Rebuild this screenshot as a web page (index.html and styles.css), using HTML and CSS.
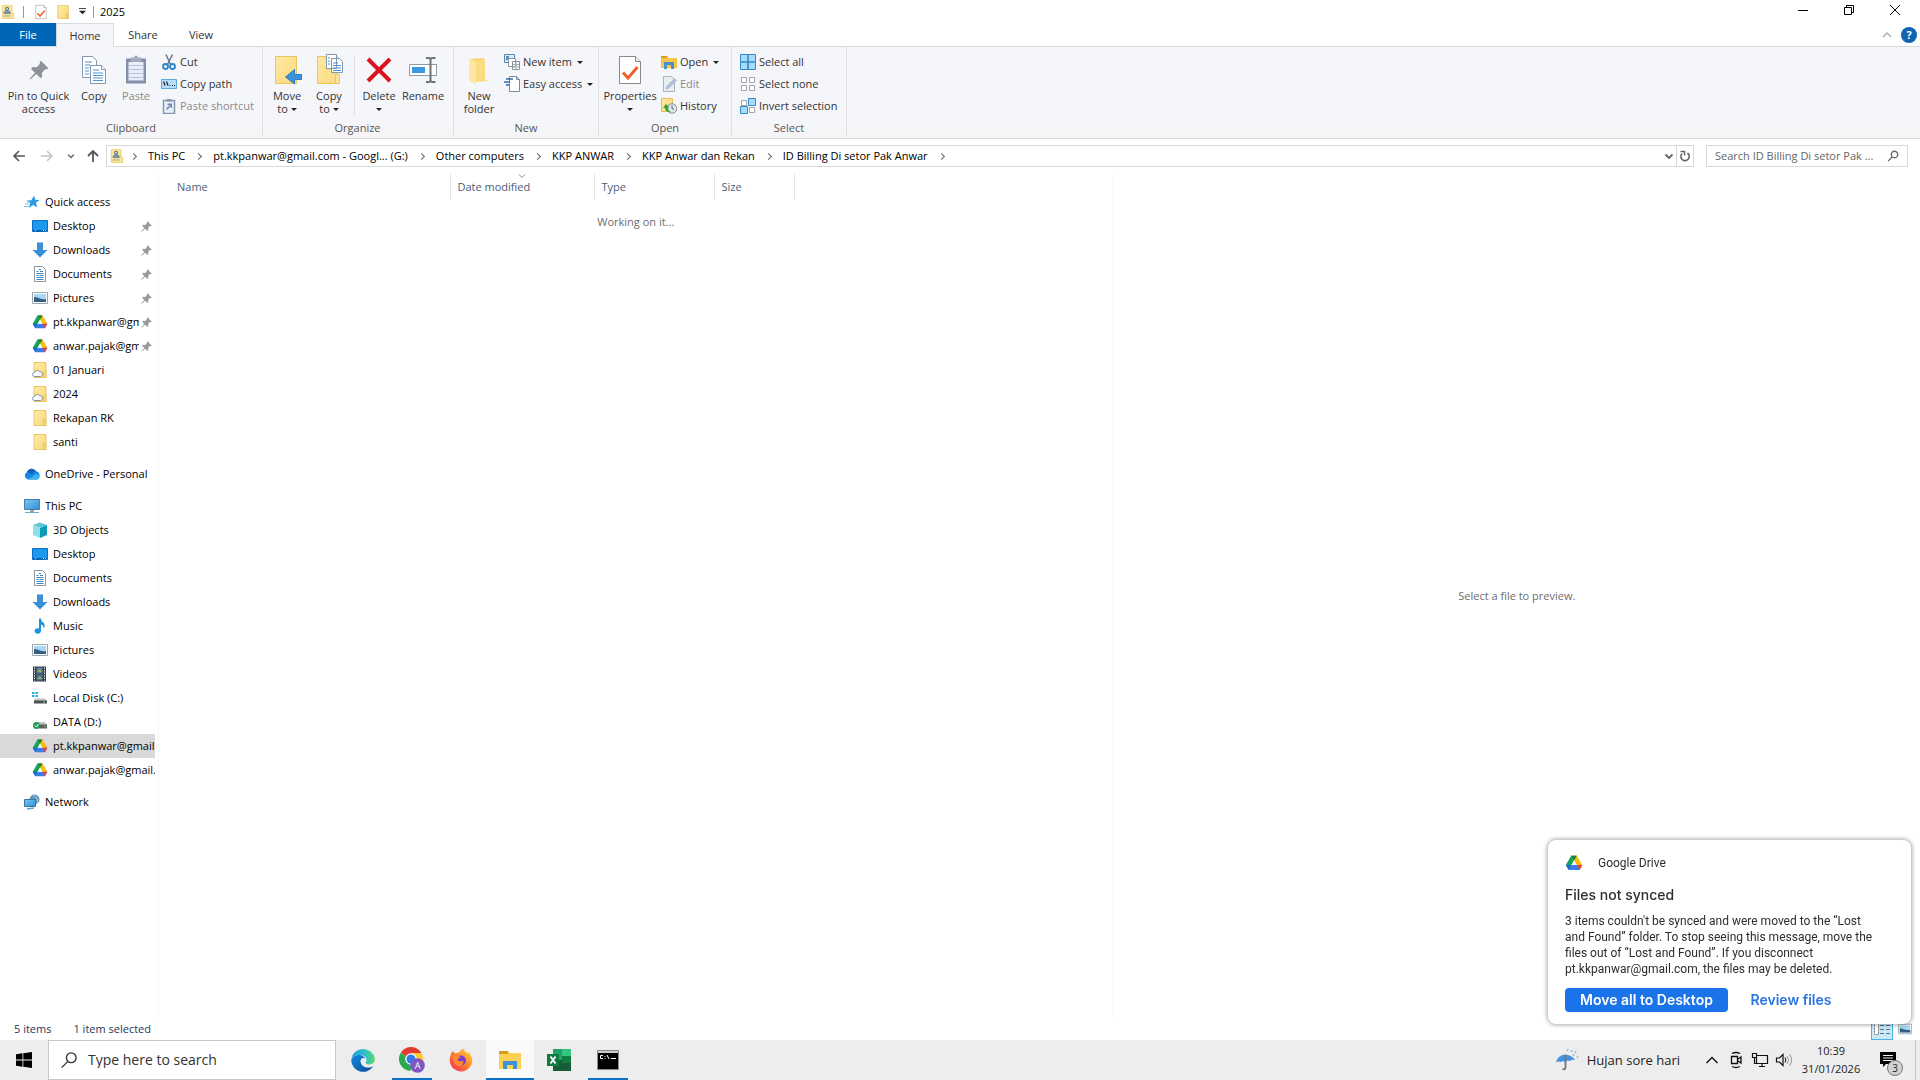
FILE: index.html
```html
<!DOCTYPE html>
<html lang="en">
<head>
<meta charset="utf-8">
<meta name="viewport" content="width=device-width, initial-scale=1">
<title>2025</title>
<link rel="stylesheet" href="styles.css">
</head>
<body>
<svg class="sprite" aria-hidden="true">
  <defs>
    <linearGradient id="g-folder" x1="0" y1="0" x2="1" y2="1"><stop offset="0" stop-color="#ffe9a2"/><stop offset="1" stop-color="#f9d97f"/></linearGradient>
    <linearGradient id="g-sky" x1="0" y1="0" x2="1" y2="1"><stop offset="0" stop-color="#7cc7f2"/><stop offset="1" stop-color="#2f8fd6"/></linearGradient>
    <linearGradient id="g-edge" x1="0" y1="0" x2="1" y2="0"><stop offset="0" stop-color="#1c9de0"/><stop offset="0.6" stop-color="#2fc1c9"/><stop offset="1" stop-color="#5fdc6b"/></linearGradient>
    <linearGradient id="g-edge2" x1="0" y1="0" x2="1" y2="1"><stop offset="0" stop-color="#1489dc"/><stop offset="1" stop-color="#0b4c9c"/></linearGradient>
    <linearGradient id="g-fox" x1="1" y1="0" x2="0" y2="1"><stop offset="0" stop-color="#ffe14a"/><stop offset="0.45" stop-color="#ff8a2a"/><stop offset="1" stop-color="#f0245c"/></linearGradient>
    <symbol id="i-folder" viewBox="0 0 16 16"><path d="M2 .5h12v15H2z" fill="url(#g-folder)" stroke="#e9c766"/><path d="M11.500 10h2.500v5.500h-2.500z" fill="#fbe08b" stroke="#e3bd57"/></symbol>
    <symbol id="i-cloudfolder" viewBox="0 0 16 16"><use href="#i-folder"/><path d="M2.500 14.500a2 2 0 0 1 .2-4 2.600 2.600 0 0 1 4.900-.6 2.300 2.300 0 0 1 .9 4.600z" fill="#fff" stroke="#8095b5"/></symbol>
    <symbol id="i-userfolder" viewBox="0 0 16 16"><path d="M1.500.5h11v9h2v6h-13z" fill="#fbe58f" stroke="#e8cf72"/><circle cx="7" cy="4.200" r="1.600" fill="#dfeaf2" stroke="#47709d" stroke-width="1.200"/><path d="M3.500 9.500c0-4 7-4 7 0z" fill="#7ba0bf" stroke="#47709d"/><path d="M3 12.500h8" stroke="#89a5bd"/></symbol>
    <symbol id="i-check" viewBox="0 0 24 32"><path d="M1.500 2.500h16l5 5v22h-21z" fill="#fff" stroke="#8a8a8a"/><path d="M17.500 2.500v5h5" fill="#eee" stroke="#8a8a8a"/><path d="M5 18.500l5 5.500L19.500 13" fill="none" stroke="#ee6127" stroke-width="3"/></symbol>
    <symbol id="i-pin" viewBox="0 0 16 16"><path d="M9.500.5l6 6-1.300 1-1.200-.2-2.600 2.700.2 3.200-1.400 1.300-3.300-3.400L1 15.500l-.5-.5 4.300-4.900L1.600 6.900 3 5.500l3.200.2L8.800 3l-.3-1.300z" fill="#8d9399"/></symbol>
    <symbol id="i-docs" viewBox="0 0 32 32"><g fill="#fff" stroke="#8498ad"><path d="M4.500 2.500h10l4 4v17h-14z"/><path d="M12.500 11.500h11l4 4v14h-15z"/><path d="M23.500 11.500v4h4"/></g><path d="M7 8h7M7 11h5M7 14h4M7 17h4M7 20h4M15 16h6M15 19h10M15 21.500h10M15 24h10M15 26.500h10" stroke="#4d93d6"/></symbol>
    <symbol id="i-paste" viewBox="0 0 32 32"><path d="M6 4.500h20v25H6z" fill="#8590ad"/><path d="M8.500 8h15v18.500h-15z" fill="#e9eef8"/><path d="M11 3.500h3a2 2 0 0 1 4 0h3V8H11z" fill="#a5acbd"/><path d="M8.500 11.500h15M8.500 15.500h15M8.500 19.500h15M8.500 23.500h15" stroke="#b4c2da"/></symbol>
    <symbol id="i-cut" viewBox="0 0 16 16"><path d="M5 .5l4.500 10M11.500.5L6.500 10.500" stroke="#68798b" stroke-width="1.500"/><circle cx="4.500" cy="12.500" r="2.500" fill="none" stroke="#2c83c5" stroke-width="1.800"/><circle cx="11.500" cy="12.500" r="2.500" fill="none" stroke="#2c83c5" stroke-width="1.800"/></symbol>
    <symbol id="i-path" viewBox="0 0 16 16"><path d="M.5 3.500h15v9H.5z" fill="#b4defa" stroke="#5fa9dd"/><path d="M2.500 5.500l1.500 4M5.500 5.500l1.500 4M8.500 9.500h1M11 9.500h1M13 9.500h1" stroke="#222" stroke-width="1.200"/></symbol>
    <symbol id="i-shortcut" viewBox="0 0 16 16"><path d="M2.500 2.500h11v13h-11z" fill="#eaf0fa" stroke="#8893ad" stroke-width="1.500"/><path d="M5.500 1h5v2.500h-5z" fill="#8893ad"/><path d="M5.500 12.500V10L9 7H6.500V5.500H11V10H9.700V8.300L7 11z" fill="#6c86b8"/></symbol>
    <symbol id="i-move" viewBox="0 0 32 32"><path d="M4.500 2.500h21v27h-21z" fill="url(#g-folder)" stroke="#eac45c"/><path d="M30.500 20.500v5h-7v4.500L14.500 23l9-7.500v5z" fill="#3e92dc" stroke="#2c7fc9"/></symbol>
    <symbol id="i-copyto" viewBox="0 0 32 32"><path d="M4.500 2.500h20v27h-20z" fill="url(#g-folder)" stroke="#eac45c"/><path d="M22.500 20.500h4v9h-4z" fill="#ffe59a" stroke="#eac45c"/><path d="M13.500.5h10v14h-10zM18.500 4.500h8l3 3v11h-11z" fill="#fff" stroke="#8498ad"/><path d="M20 9h5M20 11.500h8M20 14h8M20 16.500h8M15 4h2M15 7h2M15 10h2" stroke="#4d93d6"/></symbol>
    <symbol id="i-delete" viewBox="0 0 32 32"><path d="M5 5l22 22M27 5L5 27" stroke="#d9141e" stroke-width="4"/></symbol>
    <symbol id="i-rename" viewBox="0 0 32 32"><path d="M2.500 10.500h27v11h-27z" fill="#fff" stroke="#8e9aa5"/><path d="M5 13h13v6H5z" fill="#3b97e0"/><path d="M19 4h3q1.500 0 1.500 2v20q0 2-1.500 2h-3M28.500 4h-3q-2 0-2 2v20q0 2 2 2h3" fill="none" stroke="#6d7379" stroke-width="2"/></symbol>
    <symbol id="i-newfolder" viewBox="0 0 32 32"><path d="M6 5l15-1v22H6z" fill="#f7d372"/><path d="M6 4l7 4v23l-7-5z" fill="#fde7a3"/><path d="M13 8l9-3v20l3 2-12 1z" fill="#fbdc85"/></symbol>
    <symbol id="i-newitem" viewBox="0 0 16 16"><path d="M.5.5h10v8H.5z" fill="#d8ecfb" stroke="#5b88b3"/><path d="M2 3h3M2 5h2" stroke="#2e6da4" stroke-width="1.300"/><path d="M4.500 4.500h7v8h-7zM8.500 7.500h7v8h-7z" fill="#fff" stroke="#8b949c"/><path d="M9 10.500h6M9 13h6M12 8v7" stroke="#a6aeb5"/></symbol>
    <symbol id="i-easy" viewBox="0 0 16 16"><path d="M5.500.5h7l3 3v12h-10z" fill="#fff" stroke="#7f8a94"/><path d="M12.500.5v3h3" fill="none" stroke="#7f8a94"/><path d="M2 3h7M0 6h6M2 9h3" stroke="#2b6ca8" stroke-width="1.500"/></symbol>
    <symbol id="i-open" viewBox="0 0 16 16"><path d="M0 2h6l1 2h9v10H0z" fill="#f4c649"/><path d="M0 2h6l1 2H0z" fill="#d79d20"/><path d="M3 15V8h10v7h-3v-4H6v4z" fill="#4a8fce"/></symbol>
    <symbol id="i-edit" viewBox="0 0 16 16"><path d="M2.500.5h8l3 3v12h-11z" fill="#e9eef5" stroke="#a7b4c5"/><path d="M5 13l1-3 7.500-7.500 2 2L8 12z" fill="#b3c4dc" stroke="#92a6c4" stroke-width=".6"/></symbol>
    <symbol id="i-history" viewBox="0 0 16 16"><path d="M.5.5h11v13H.5z" fill="url(#g-folder)" stroke="#e3bd57"/><circle cx="11" cy="10.500" r="4.800" fill="#dfe6ec" stroke="#82909c"/><path d="M11 7.500v3l2 1" stroke="#566" fill="none"/><path d="M2 10l3-4 3.500 3.500H7q0 3 3 4.500-5.500.5-6-4z" fill="#2fa43a"/></symbol>
    <symbol id="i-selall" viewBox="0 0 16 16"><path d="M.5.5h15v15H.5z" fill="#a5dcfb" stroke="#3788c8"/><path d="M8 0v16M0 8h16" stroke="#3788c8" stroke-width="1.600"/></symbol>
    <symbol id="i-selnone" viewBox="0 0 16 16"><path d="M1.500 1.500h5v5h-5zM9.500 1.500h5v5h-5zM1.500 9.500h5v5h-5zM9.500 9.500h5v5h-5z" fill="#fff" stroke="#a4a4a4"/></symbol>
    <symbol id="i-selinv" viewBox="0 0 16 16"><path d="M1.500 2.500h5v5h-5zM9.500 9.500h5v5h-5z" fill="#fff" stroke="#a4a4a4"/><path d="M8.500.5h7v7h-7zM.5 8.500h7v7h-7z" fill="#a5dcfb" stroke="#3788c8"/></symbol>
    <symbol id="i-star" viewBox="0 0 16 16"><path d="M10 1.500l1.300 4.200 4.200.3-3.500 2.800 1.200 4.700-3.900-2.600L4.500 14l1.800-4.700L2.500 6.500l4.800-.3z" fill="#2e9be3"/><path d="M1 10h4M0 12.500h4.500M3 8l3-.5" stroke="#7cc1ee"/></symbol>
    <symbol id="i-desktop" viewBox="0 0 16 16"><path d="M.5 2.500h15v11H.5z" fill="#1c9af0" stroke="#0c6fc0"/><path d="M1 12.500h14" stroke="#0a5ba3"/><path d="M3 12.500h1M11 12.500h1M13 12.500h1" stroke="#9fd5ff"/></symbol>
    <symbol id="i-down" viewBox="0 0 16 16"><path d="M5 .5h6V8h4.500L8 15.500.5 8H5z" fill="#3b8fd8"/></symbol>
    <symbol id="i-document" viewBox="0 0 16 16"><path d="M2.500.5h8l3 3v12h-11z" fill="#fff" stroke="#8a959f"/><path d="M7 3.500h2M4.500 5.500h2M8 5.500h3M4.500 7.500h7M4.500 9.500h2M7.500 9.500h4M4.500 11.500h7M4.500 13.500h7" stroke="#3b83bb"/></symbol>
    <symbol id="i-picture" viewBox="0 0 16 16"><path d="M.5 2.500h15v11H.5z" fill="#fff" stroke="#9aa5af"/><path d="M2 4h12v8H2z" fill="#a9d8f4"/><path d="M2 7c4 0 6 3 12 2v3H2z" fill="#33607f"/></symbol>
    <symbol id="i-drive" viewBox="0 0 16 16"><path d="M5.500 1.500h5L8 5.800 3.400 14 .7 9.700z" fill="#13a45b"/><path d="M5.500 1.500h5l4.900 8.300h-5z" fill="#fbbc05"/><path d="M3.200 14.200l2.500-4.400h9.700l-2.500 4.400z" fill="#3b7ded"/><path d="M.7 9.800h5l-2.500 4.400z" fill="#1a67d6"/><path d="M10.400 9.800h5l-2.500 4.400z" fill="#ea4335"/><path d="M5.500 1.500h5L8 5.800z" fill="#0c8443"/><path d="M8 5.800l2.400 4H5.700z" fill="#fff"/></symbol>
    <symbol id="i-onedrive" viewBox="0 0 16 16"><path d="M4 13.500A4 4 0 0 1 3 6a5 5 0 0 1 9-.7 4.200 4.200 0 0 1 .5 8.200z" fill="#1686e0"/><path d="M3 6a5 5 0 0 1 9-.7Q9 5.500 8 8z" fill="#1560b8"/><path d="M4 13.500L12 8q4 1 3.500 3.500t-3 2z" fill="#3bb4f2"/></symbol>
    <symbol id="i-pc" viewBox="0 0 16 16"><path d="M.5 1.500h15v10H.5z" fill="url(#g-sky)" stroke="#4c7ea8"/><path d="M6 12h4v2H6z" fill="#8fa9bb"/><path d="M1 14.500h14" stroke="#7faac6"/></symbol>
    <symbol id="i-3d" viewBox="0 0 16 16"><path d="M1 3l7-2.500L15 3 8 6z" fill="#5ec4d8"/><path d="M1 3l7 3v10l-7-3z" fill="#8ee0e8"/><path d="M15 3L8 6v10l7-3z" fill="#0c9bb4"/></symbol>
    <symbol id="i-music" viewBox="0 0 16 16"><path d="M7 .5h2q0 3 3 4.500 1.500 3-.5 5.500Q11.500 7 9 6.500V13a3.200 2.700 0 1 1-2-2.500z" fill="#1795e0"/></symbol>
    <symbol id="i-video" viewBox="0 0 16 16"><path d="M1 .5h13v15H1z" fill="#39414a"/><path d="M4.500 1.500h6v6h-6z" fill="#57829b"/><path d="M4.500 8.500h6v6h-6z" fill="#4c6f9e"/><path d="M5 6l3-3 2 3zM5 13l3-3 2 3z" fill="#9eb04d"/><path d="M2.500 1.500v13M12.500 1.500v13" stroke="#dfe4e8" stroke-width="1" stroke-dasharray="1.500 1"/></symbol>
    <symbol id="i-disk" viewBox="0 0 16 16"><path d="M0 2h2.500v2H0zM3.500 2H6v2H3.500zM0 5h2.500v2H0zM3.500 5H6v2H3.500z" fill="#29b3dd"/><path d="M3 8.500h10l2 2.500H2z" fill="#c1c4c6"/><path d="M2 10.500h13v3H2z" fill="#4c5053"/><path d="M11 12h2" stroke="#6be05c"/></symbol>
    <symbol id="i-data" viewBox="0 0 16 16"><path d="M6 8h7l2 3H6z" fill="#c1c4c6"/><path d="M7 10.500h8v4H7z" fill="#5b5f62"/><circle cx="4.500" cy="11.500" r="3.500" fill="#249b57"/><path d="M3 11.500l1.500 1.500 2-3" stroke="#fff" fill="none"/><path d="M12 12.500h1.500" stroke="#6be05c"/></symbol>
    <symbol id="i-network" viewBox="0 0 16 16"><circle cx="10.500" cy="5.500" r="5" fill="#6296bd"/><path d="M9 1q6 3 4 9" stroke="#a9cde6" fill="none"/><path d="M.5 5.500h11v7H.5z" fill="url(#g-sky)" stroke="#39759e"/><path d="M3 15l7-1" stroke="#59a2cc" stroke-width="1.500"/></symbol>
    <symbol id="i-chev-d" viewBox="0 0 10 10"><path d="M1.500 3.500L5 7l3.500-3.500" fill="none" stroke="#666" stroke-width="1.800"/></symbol>
    <symbol id="i-glass" viewBox="0 0 16 16"><circle cx="10" cy="6" r="4.300" fill="none" stroke="currentColor" stroke-width="var(--sw,1.8)"/><path d="M7 9.200L1.500 14.800" stroke="currentColor" stroke-width="var(--sw,1.8)"/></symbol>
  </defs>
</svg>

<header class="titlebar">
  <svg class="ic16"><use href="#i-userfolder"/></svg>
  <span class="vbar"></span>
  <button class="quick" aria-label="Properties"><svg class="ic-check"><use href="#i-check"/></svg></button>
  <button class="quick" aria-label="New folder"><svg class="ic16"><use href="#i-folder"/></svg></button>
  <button class="quick-more" aria-label="Customize toolbar"><svg width="7" height="7" viewBox="0 0 8 8"><path d="M0 .5h8" stroke="#222"/><path d="M0 3h8L4 7z" fill="#222"/></svg></button>
  <span class="vbar"></span>
  <h1 class="window-title">2025</h1>
  <div class="window-controls">
    <button aria-label="Minimize"><svg width="12" height="12"><path d="M1 6.500h10" stroke="#000"/></svg></button>
    <button aria-label="Restore"><svg width="12" height="12"><path d="M1.500 3.500h7v7h-7zM3.500 3.500v-2h7v7h-2" fill="none" stroke="#000"/></svg></button>
    <button aria-label="Close"><svg width="12" height="12"><path d="M1 1l10 10M11 1L1 11" stroke="#000"/></svg></button>
  </div>
</header>

<nav class="tabs" aria-label="Ribbon tabs">
  <button class="tab tab-file">File</button>
  <button class="tab tab-active">Home</button>
  <button class="tab">Share</button>
  <button class="tab">View</button>
  <div class="tabs-end">
    <button aria-label="Collapse ribbon"><svg width="10" height="10"><path d="M1 7l4-4 4 4" fill="none" stroke="#a9a9a9" stroke-width="1.300"/></svg></button>
    <button class="help" aria-label="Help">?</button>
  </div>
</nav>

<section class="ribbon" aria-label="Ribbon">
  <div class="group group-clipboard">
    <div class="group-body">
      <button class="big big-wide"><svg class="ic-pin-big"><use href="#i-pin"/></svg><span>Pin to Quick<br>access</span></button>
      <button class="big"><svg><use href="#i-docs"/></svg><span>Copy</span></button>
      <button class="big" disabled><svg><use href="#i-paste"/></svg><span>Paste</span></button>
      <div class="small-col">
        <button class="small"><svg><use href="#i-cut"/></svg>Cut</button>
        <button class="small"><svg><use href="#i-path"/></svg>Copy path</button>
        <button class="small" disabled><svg><use href="#i-shortcut"/></svg>Paste shortcut</button>
      </div>
    </div>
    <div class="group-label">Clipboard</div>
  </div>
  <div class="group group-organize">
    <div class="group-body">
      <button class="big"><svg><use href="#i-move"/></svg><span>Move<br>to <i class="caret"></i></span></button>
      <button class="big"><svg><use href="#i-copyto"/></svg><span>Copy<br>to <i class="caret"></i></span></button>
      <span class="group-split"></span>
      <button class="big"><svg><use href="#i-delete"/></svg><span>Delete<br><i class="caret"></i></span></button>
      <button class="big big-rename"><svg><use href="#i-rename"/></svg><span>Rename</span></button>
    </div>
    <div class="group-label">Organize</div>
  </div>
  <div class="group group-new">
    <div class="group-body">
      <button class="big"><svg><use href="#i-newfolder"/></svg><span>New<br>folder</span></button>
      <div class="small-col">
        <button class="small"><svg><use href="#i-newitem"/></svg>New item<i class="caret"></i></button>
        <button class="small"><svg><use href="#i-easy"/></svg>Easy access<i class="caret"></i></button>
      </div>
    </div>
    <div class="group-label">New</div>
  </div>
  <div class="group group-open">
    <div class="group-body">
      <button class="big big-mid"><svg><use href="#i-check"/></svg><span>Properties<br><i class="caret"></i></span></button>
      <div class="small-col">
        <button class="small"><svg><use href="#i-open"/></svg>Open<i class="caret"></i></button>
        <button class="small" disabled><svg><use href="#i-edit"/></svg>Edit</button>
        <button class="small"><svg><use href="#i-history"/></svg>History</button>
      </div>
    </div>
    <div class="group-label">Open</div>
  </div>
  <div class="group group-select">
    <div class="group-body">
      <div class="small-col">
        <button class="small"><svg><use href="#i-selall"/></svg>Select all</button>
        <button class="small"><svg><use href="#i-selnone"/></svg>Select none</button>
        <button class="small"><svg><use href="#i-selinv"/></svg>Invert selection</button>
      </div>
    </div>
    <div class="group-label">Select</div>
  </div>
</section>

<div class="navbar">
  <div class="nav-buttons">
    <button aria-label="Back"><svg width="14" height="12"><path d="M7 1L2 6l5 5M2 6h11" fill="none" stroke="#555" stroke-width="1.600"/></svg></button>
    <button aria-label="Forward" disabled><svg width="14" height="12"><path d="M7 1l5 5-5 5M12 6H1" fill="none" stroke="#c4c4c4" stroke-width="1.600"/></svg></button>
    <button class="nav-recent" aria-label="Recent locations"><svg width="8" height="8"><use href="#i-chev-d"/></svg></button>
    <button class="nav-up" aria-label="Up"><svg width="12" height="14"><path d="M1 7l5-5 5 5M6 2v11" fill="none" stroke="#555" stroke-width="1.800"/></svg></button>
  </div>
  <div class="address">
    <svg class="ic16"><use href="#i-userfolder"/></svg>
    <ol class="crumbs">
      <li><a href="#">This PC</a></li>
      <li><a href="#">pt.kkpanwar@gmail.com - Googl... (G:)</a></li>
      <li><a href="#">Other computers</a></li>
      <li><a href="#">KKP ANWAR</a></li>
      <li><a href="#">KKP Anwar dan Rekan</a></li>
      <li><a href="#">ID Billing Di setor Pak Anwar</a></li>
      <li></li>
    </ol>
    <button class="address-more" aria-label="Previous locations"><svg width="10" height="10"><use href="#i-chev-d"/></svg></button>
    <button class="refresh" aria-label="Refresh"><svg width="12" height="12"><path d="M8.500 3a4.200 4.200 0 1 1-5.500.5" fill="none" stroke="#666" stroke-width="1.600"/><path d="M1.500 1.500h4v4" fill="none" stroke="#666" stroke-width="1.500"/></svg></button>
  </div>
  <div class="search">
    <input type="text" aria-label="Search folder" placeholder="Search ID Billing Di setor Pak ...">
    <svg width="12" height="12"><use href="#i-glass"/></svg>
  </div>
</div>

<main class="panes">
  <nav class="sidebar" aria-label="Navigation pane">
    <ul>
      <li class="root"><svg><use href="#i-star"/></svg><a href="#">Quick access</a></li>
      <li><svg><use href="#i-desktop"/></svg><a href="#">Desktop</a><svg class="pinned"><use href="#i-pin"/></svg></li>
      <li><svg><use href="#i-down"/></svg><a href="#">Downloads</a><svg class="pinned"><use href="#i-pin"/></svg></li>
      <li><svg><use href="#i-document"/></svg><a href="#">Documents</a><svg class="pinned"><use href="#i-pin"/></svg></li>
      <li><svg><use href="#i-picture"/></svg><a href="#">Pictures</a><svg class="pinned"><use href="#i-pin"/></svg></li>
      <li><svg><use href="#i-drive"/></svg><a href="#">pt.kkpanwar@gmail.com</a><svg class="pinned"><use href="#i-pin"/></svg></li>
      <li><svg><use href="#i-drive"/></svg><a href="#">anwar.pajak@gmail.com</a><svg class="pinned"><use href="#i-pin"/></svg></li>
      <li><svg><use href="#i-cloudfolder"/></svg><a href="#">01 Januari</a></li>
      <li><svg><use href="#i-cloudfolder"/></svg><a href="#">2024</a></li>
      <li><svg><use href="#i-folder"/></svg><a href="#">Rekapan RK</a></li>
      <li><svg><use href="#i-folder"/></svg><a href="#">santi</a></li>
    </ul>
    <ul>
      <li class="root"><svg><use href="#i-onedrive"/></svg><a href="#">OneDrive - Personal</a></li>
    </ul>
    <ul>
      <li class="root"><svg><use href="#i-pc"/></svg><a href="#">This PC</a></li>
      <li><svg><use href="#i-3d"/></svg><a href="#">3D Objects</a></li>
      <li><svg><use href="#i-desktop"/></svg><a href="#">Desktop</a></li>
      <li><svg><use href="#i-document"/></svg><a href="#">Documents</a></li>
      <li><svg><use href="#i-down"/></svg><a href="#">Downloads</a></li>
      <li><svg><use href="#i-music"/></svg><a href="#">Music</a></li>
      <li><svg><use href="#i-picture"/></svg><a href="#">Pictures</a></li>
      <li><svg><use href="#i-video"/></svg><a href="#">Videos</a></li>
      <li><svg><use href="#i-disk"/></svg><a href="#">Local Disk (C:)</a></li>
      <li><svg><use href="#i-data"/></svg><a href="#">DATA (D:)</a></li>
      <li class="selected"><svg><use href="#i-drive"/></svg><a href="#">pt.kkpanwar@gmail.com</a></li>
      <li><svg><use href="#i-drive"/></svg><a href="#">anwar.pajak@gmail.com</a></li>
    </ul>
    <ul>
      <li class="root"><svg><use href="#i-network"/></svg><a href="#">Network</a></li>
    </ul>
  </nav>

  <section class="files" aria-label="Files">
    <table>
      <colgroup><col class="c-name"><col class="c-date"><col class="c-type"><col class="c-size"><col></colgroup>
      <thead>
        <tr>
          <th>Name</th>
          <th class="sorted">Date modified<svg width="8" height="5"><path d="M1 .5l3 3 3-3" fill="none" stroke="#888"/></svg></th>
          <th>Type</th>
          <th>Size</th>
          <td></td>
        </tr>
      </thead>
      <tbody><tr><td colspan="5" class="loading">Working on it...</td></tr></tbody>
    </table>
  </section>

  <aside class="preview">Select a file to preview.</aside>
</main>

<footer class="status">
  <span>5 items</span>
  <span>1 item selected</span>
  <div class="views">
    <button class="view-details" aria-label="Details view"><svg width="18" height="16"><path d="M1.500 2.500h4v11h-4z" fill="#fff" stroke="#777" stroke-dasharray="2 1"/><path d="M7 4.500h4M7 8.500h4M7 12.500h4M13 4.500h4M13 8.500h4M13 12.500h4" stroke="#51758c"/></svg></button>
    <button aria-label="Thumbnail view"><svg width="14" height="14"><use href="#i-picture"/></svg></button>
  </div>
</footer>

<div class="taskbar">
  <button class="start" aria-label="Start"><svg width="16" height="16"><path d="M0 2.200L6.500 1.300V7.600H0zM7.300 1.200L16 0v7.600H7.300zM0 8.400h6.500v6.300L0 13.800zM7.300 8.400H16V16l-8.700-1.200z"/></svg></button>
  <label class="task-search">
    <svg width="18" height="18"><use href="#i-glass"/></svg>
    <input type="text" aria-label="Type here to search" placeholder="Type here to search">
  </label>
  <div class="apps">
    <button aria-label="Edge"><svg width="24" height="24" viewBox="0 0 24 24"><path d="M.3 11A12 12 0 0 1 23.900 10.500c.3 4-2.500 6-5.400 6-2.700 0-4.300-1-3.500-2.500C17 10 13 6.500 8.500 7 5 7 1.500 8.500.3 11z" fill="url(#g-edge)"/><path d="M.2 12.500C1 8.500 5 7 8.500 7q4 0 5.500 3.500-4-1.500-4.500 2.500c0 4 4 7 8.500 6.500q2 0 4.300-1.200A12 12 0 0 1 .2 12.500z" fill="url(#g-edge2)"/></svg></button>
    <button class="running" aria-label="Chrome"><svg width="26" height="26" viewBox="0 0 26 26"><path d="M12 12L1.600 6A12 12 0 0 1 22.400 6z" fill="#e33b2e"/><path d="M12 12L1.600 6A12 12 0 0 0 11 24l5-8z" fill="#2da94f"/><path d="M12 12V6h10.400A12 12 0 0 1 12 24z" fill="#fcc934"/><circle cx="12" cy="12" r="5.800" fill="#fff"/><circle cx="12" cy="12" r="4.500" fill="#2f7de9"/><circle cx="18.500" cy="18.500" r="7.300" fill="#7e57c2"/><text x="18.500" y="22" text-anchor="middle" class="avatar">A</text></svg></button>
    <button aria-label="Firefox"><svg width="24" height="24" viewBox="0 0 24 24"><path d="M4 3q1 1 2 2.500 2-1 4-1Q12 1 15 .5q0 3 4 5V3.500Q23 8 23.300 13A11.300 11.300 0 1 1 1.500 8Q2 4 4 3z" fill="url(#g-fox)"/><circle cx="12" cy="12.500" r="5" fill="#7b3fd0"/><path d="M3 8q3-2 5 0 3 0 4 1.500-4 1-3.500 2.500 2 2.500 6 .5 0 4-3 5.500-6 1-8.500-10z" fill="#ff8a2a"/></svg></button>
    <button class="running active" aria-label="File Explorer"><svg width="24" height="24" viewBox="0 0 24 24"><path d="M1 3h9l2 2h11v16H1z" fill="#fccf55"/><path d="M1 3h9v3H1z" fill="#d79d20"/><path d="M5 21v-8h14v8h-4v-4H9v4z" fill="#3d91dc"/></svg></button>
    <button aria-label="Excel"><svg width="24" height="24" viewBox="0 0 24 24"><path d="M6 1h9v22H6z" fill="#21a366"/><path d="M15 1h9v7h-9z" fill="#33c481"/><path d="M15 8h9v7h-9z" fill="#107c41"/><path d="M6 12h9v11H6zM15 15h9v8h-9z" fill="#185c37"/><path d="M0 6h12v12H0z" fill="#107c41"/><path d="M3.500 8.500l5 7M8.500 8.500l-5 7" stroke="#fff" stroke-width="1.900"/></svg></button>
    <button class="running" aria-label="Command Prompt"><svg width="22" height="20" viewBox="0 0 22 20"><path d="M.5.5h21v19H.5z" fill="#000" stroke="#888"/><path d="M1 2h20" stroke="#ccc" stroke-width="2"/><path d="M6 5.500H3.500v3H6M8 6v.8M8 8v.8M10 5l2 4M14 8.500h5" stroke="#fff" fill="none"/></svg></button>
  </div>
  <div class="tray">
    <button class="weather"><svg width="24" height="24" viewBox="0 0 24 24"><path d="M1 14Q3 7 10 6.500 17 7 20 12q-3-1-5 1-3-1.500-5 1-2-1.500-4.500 0-2-1-4.500 0z" fill="#4593dc"/><path d="M10.500 7v12.500q-.5 2.500-3 1.500" fill="none" stroke="#6e7680" stroke-width="1.800"/><path d="M12 3l1-2M16 4l1-2M20 5l1-2M18 8l1-2M22 10l1-2" stroke="#8fbfe6" stroke-width="1.500"/></svg>Hujan sore hari</button>
    <button aria-label="Show hidden icons"><svg width="14" height="14"><path d="M1.500 10L7 4.500 12.500 10" fill="none" stroke="#111" stroke-width="1.400"/></svg></button>
    <button aria-label="Meet now"><svg width="14" height="18"><path d="M2.500 5.500h6v7h-6zM9 8l3-2v6l-3-2M3 2.500q4-2 8 0M3 15.500q4 2 8 0" fill="none" stroke="#111" stroke-width="1.300"/></svg></button>
    <button aria-label="Network"><svg width="18" height="16"><path d="M5.500 3.500h11v8h-11zM11 12v3M8 14.500h6M1.500 1.500h4v4h-4zM3.500 6v5.500h2" fill="none" stroke="#111" stroke-width="1.200"/></svg></button>
    <button aria-label="Volume"><svg width="18" height="16"><path d="M1.500 6h3l3.500-3.500v11L4.500 10h-3z" fill="none" stroke="#111" stroke-width="1.200"/><path d="M10 5.500q1.500 2.500 0 5" fill="none" stroke="#111"/><path d="M12 4q3 4 0 8M14.500 2q4 6 0 12" fill="none" stroke="#999"/></svg></button>
    <button class="clock"><span>10:39</span><span>31/01/2026</span></button>
    <button class="notify" aria-label="Notifications"><svg width="18" height="18"><path d="M1 1h16v12H7l-3 3v-3H1z" fill="#000"/><path d="M4 4.500h10M4 7h10M4 9.500h10" stroke="#eee"/></svg><span class="badge">3</span></button>
  </div>
</div>

<div class="toast" role="alertdialog" aria-labelledby="toast-title">
  <div class="toast-app"><svg width="18" height="18"><use href="#i-drive"/></svg>Google Drive</div>
  <h2 id="toast-title">Files not synced</h2>
  <p>3 items couldn't be synced and were moved to the “Lost<br>and Found” folder. To stop seeing this message, move the<br>files out of “Lost and Found”. If you disconnect<br>pt.kkpanwar@gmail.com, the files may be deleted.</p>
  <div class="toast-actions">
    <button class="primary">Move all to Desktop</button>
    <button class="secondary">Review files</button>
  </div>
</div>
</body>
</html>
```
FILE: styles.css
```css
:root {
  --ui: "Open Sans", "Noto Sans", sans-serif;
}
* { box-sizing: border-box; }
body {
  margin: 0;
  min-height: 100vh;
  display: flex;
  flex-direction: column;
  background: #fff;
  color: #111;
  font: 11px/16px var(--ui);
}
button, input { font: inherit; color: inherit; }
button { border: 0; padding: 0; background: none; }
input { border: 0; padding: 0; background: none; outline: 0; min-width: 0; }
input::placeholder { color: inherit; opacity: 1; }
a { color: inherit; text-decoration: none; }
ul, ol { list-style: none; margin: 0; padding: 0; }
svg { display: block; flex: none; }
.sprite { position: absolute; width: 0; height: 0; }
.ic16 { width: 14px; height: 14px; }

/* Title bar */
.titlebar { display: flex; align-items: center; height: 23px; padding: 0 2px 0 1px; }
.vbar { width: 1px; height: 12px; background: #999; margin: 0 6px 0 8px; }
.quick { width: 22px; height: 22px; display: grid; place-items: center; }
.ic-check { width: 12px; height: 16px; }
.quick-more { width: 16px; height: 22px; display: grid; place-items: center; }
.quick-more + .vbar { margin-left: 3px; }
.window-title { flex: 1; margin: 0; font-size: 11px; font-weight: 400; color: #000; }
.window-controls { display: flex; }
.window-controls button { width: 46px; height: 23px; padding-bottom: 3px; display: grid; place-items: center; }

/* Tabs */
.tabs { display: flex; height: 24px; border-bottom: 1px solid #d9dadb; }
.tab { height: 23px; width: 58px; color: #333; }
.tab-file { width: 56px; background: #0067b8; color: #fff; }
.tab-active { height: 24px; background: #f5f6f9; border: 1px solid #d9dadb; border-bottom: 0; }
.tabs-end { margin-left: auto; display: flex; align-items: center; gap: 9px; padding-right: 3px; }
.help { width: 16px; height: 16px; border-radius: 50%; background: #1064b0; color: #fff; font-weight: 700; line-height: 16px; }

/* Ribbon */
.ribbon { display: flex; height: 92px; background: linear-gradient(#f5f6fa 80%, #f5f5f6); border-bottom: 1px solid #d5d7d9; color: #333; }
.group { display: flex; flex-direction: column; border-right: 1px solid #e0e1e4; padding: 4px 4px 0; margin-bottom: 2px; }
.group-clipboard { width: 263px; }
.group-organize { width: 191px; padding-left: 3px; }
.group-new { width: 145px; }
.group-open { width: 133px; }
.group-select { width: 115px; }
.group-body { display: flex; flex: 1; }
.group-label { text-align: center; color: #555; }
.big { display: flex; flex-direction: column; align-items: center; gap: 3px; width: 42px; padding-top: 3px; line-height: 13px; white-space: nowrap; }
.big svg { width: 32px; height: 32px; }
.big .ic-pin-big { padding: 6px; }
.big-wide { width: 69px; }
.big-mid { width: 54px; }
.big-rename { width: 46px; }
.big span { display: block; }
.small-col { display: flex; flex-direction: column; margin-left: 4px; }
.small { display: flex; align-items: center; gap: 3px; height: 22px; white-space: nowrap; }
.small svg { width: 16px; height: 16px; }
.small .caret { margin-left: 2px; }
button:disabled { color: #8a8a8a; }
.caret { display: inline-block; border: 3px solid transparent; border-top-color: #222; border-bottom: 0; vertical-align: 2px; }
.group-split { width: 1px; margin: 5px 3px 5px 4px; background: #dfe0e3; }

/* Navigation bar */
.navbar { display: flex; align-items: center; padding: 5px 12px 7px 5px; height: 35px; }
.nav-buttons { display: flex; width: 101px; align-items: center; }
.nav-buttons button { width: 28px; height: 22px; display: grid; place-items: center; }
.nav-buttons .nav-recent { width: 20px; }
.nav-buttons .nav-up { width: 24px; }
.address { flex: 1; display: flex; align-items: center; height: 22px; border: 1px solid #d9d9d9; padding-left: 3px; color: #000; }
.crumbs { display: flex; flex: 1; white-space: nowrap; }
.crumbs li { display: flex; align-items: center; }
.crumbs li::before { content: ""; width: 4px; height: 4px; border: solid #666; border-width: 1px 1px 0 0; transform: rotate(45deg); margin: 1px 12px 0 11px; }
.crumbs li:first-child::before { margin-left: 7px; }
.address-more { width: 15px; display: grid; place-items: center; }
.refresh { width: 17px; height: 20px; border-left: 1px solid #d9d9d9; display: grid; place-items: center; }
.search { display: flex; align-items: center; width: 202px; height: 22px; margin-left: 12px; border: 1px solid #d9d9d9; padding: 0 8px; color: #666; }
.search input { flex: 1; }

/* Panes */
.panes { flex: 1; display: flex; }
.sidebar { width: 159px; border-right: 1px solid #f6f6f6; padding: 16px 3px 0 0; color: #000; }
.sidebar ul { margin-bottom: 8px; }
.sidebar li { display: flex; align-items: center; gap: 5px; height: 24px; padding-left: 32px; }
.sidebar .root { padding-left: 24px; }
.sidebar svg { width: 16px; height: 16px; }
.sidebar a { flex: 1; overflow: hidden; white-space: nowrap; }
.sidebar .pinned { width: 11px; height: 11px; margin: 0 3px 0 -3px; opacity: .9; }
.sidebar .selected { background: #d9d9d9; }
.files { flex: 1; border-right: 1px solid #f4f4f4; }
.files table { width: 100%; border-collapse: collapse; table-layout: fixed; }
.c-name { width: 291px; }
.c-date { width: 144px; }
.c-type { width: 120px; }
.c-size { width: 80px; }
.files th { position: relative; height: 26px; padding: 0 0 0 7px; border-right: 1px solid #e5e5e5; text-align: left; font-weight: 400; color: #4c607a; }
.files th:first-child { padding-left: 18px; }
.sorted svg { position: absolute; top: 0; left: calc(50% - 4px); }
.files .loading { padding: 14px 0; text-align: center; color: #6d6d6d; }
.preview { width: 42%; display: grid; place-items: center; color: #6d6d6d; }

/* Status bar */
.status { display: flex; align-items: center; gap: 22px; height: 22px; padding: 0 8px 0 14px; color: #1e395b; }
.views { display: flex; align-items: center; gap: 5px; margin-left: auto; }
.view-details { padding: 2px 1px; border: 1px solid #4cb2e6; background: #cbe8f6; }

/* Taskbar */
.taskbar { display: flex; height: 40px; background: #ededed; color: #222; font-size: 14px; }
.start { width: 48px; display: grid; place-items: center; }
.task-search { display: flex; align-items: center; gap: 10px; width: 288px; padding: 0 11px; background: #fff; border: 1px solid #c8c8c8; color: #333; --sw: 1.2; }
.task-search input { flex: 1; }
.apps { display: flex; gap: 1px; padding-left: 3px; }
.apps button { position: relative; width: 48px; display: grid; place-items: center; }
.apps .active { background: #fafafa; }
.running::after { content: ""; position: absolute; left: 4px; right: 4px; bottom: 0; height: 2px; background: #0a72c8; }
.active::after { left: 0; right: 0; }
.avatar { font: 9px var(--ui); fill: #fff; }
.tray { display: flex; align-items: center; margin-left: auto; padding-right: 4px; }
.tray button { width: 24px; height: 40px; display: grid; place-items: center; }
.tray .weather { display: flex; align-items: center; gap: 8px; width: auto; margin-right: 20px; white-space: nowrap; font-size: 13px; }
.tray .clock { width: 70px; display: flex; flex-direction: column; align-items: center; justify-content: center; font-size: 11px; line-height: 18px; }
.tray .notify { position: relative; width: 50px; padding-right: 6px; border-right: 1px solid #c4c4c4; }
.badge { position: absolute; right: 12px; bottom: 4px; width: 16px; height: 16px; border: 1px solid #777; border-radius: 50%; background: #d2d2d2; font-size: 10px; line-height: 14px; }

/* Notification */
.toast { position: fixed; right: 9px; bottom: 56px; width: 363px; padding: 15px 17px 12px; border-radius: 8px; background: #fff; box-shadow: 0 0 4px 1px rgba(0, 0, 0, .35); color: #2c2d30; font: 12px/16px Roboto, sans-serif; }
.toast-app { display: flex; align-items: center; gap: 15px; height: 16px; }
.toast h2 { margin: 14px 0 8px; font: 500 14px/20px Inter, sans-serif; }
.toast p { margin: 0; white-space: nowrap; }
.toast-actions { display: flex; margin-top: 11px; font: 600 14px/24px Inter, sans-serif; }
.toast-actions button { height: 24px; }
.primary { width: 163px; border-radius: 4px; background: #1a73e8; color: #fff; }
.secondary { width: 126px; color: #2b73e5; }
```
